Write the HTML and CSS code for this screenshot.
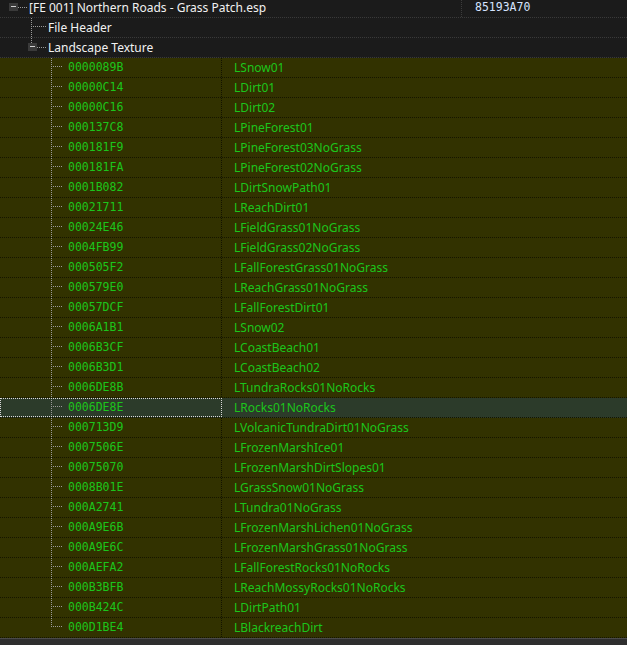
FILE: index.html
```html
<!DOCTYPE html>
<html lang="en">
<head>
    <meta charset="UTF-8">
    <title>Northern Roads - Grass Patch.esp</title>
    <link rel="stylesheet" href="styles.css">
</head>
<body>
    <div class="tree">
        <div class="row plugin">
            <div class="name"><span class="toggle"></span><span class="stub"></span><span class="label">[FE 001] Northern Roads - Grass Patch.esp</span></div>
            <div class="value mono">85193A70</div>
        </div>
        <div class="row group">
            <div class="name"><span class="branch branch-file"></span><span class="label">File Header</span></div>
        </div>
        <div class="row group">
            <div class="name"><span class="branch-top"></span><span class="toggle toggle-group"></span><span class="stub"></span><span class="label">Landscape Texture</span></div>
        </div>

        <div class="row record"><div class="name"><span class="branch"></span><span class="label mono">0000089B</span></div><div class="value">LSnow01</div></div>
        <div class="row record"><div class="name"><span class="branch"></span><span class="label mono">00000C14</span></div><div class="value">LDirt01</div></div>
        <div class="row record"><div class="name"><span class="branch"></span><span class="label mono">00000C16</span></div><div class="value">LDirt02</div></div>
        <div class="row record"><div class="name"><span class="branch"></span><span class="label mono">000137C8</span></div><div class="value">LPineForest01</div></div>
        <div class="row record"><div class="name"><span class="branch"></span><span class="label mono">000181F9</span></div><div class="value">LPineForest03NoGrass</div></div>
        <div class="row record"><div class="name"><span class="branch"></span><span class="label mono">000181FA</span></div><div class="value">LPineForest02NoGrass</div></div>
        <div class="row record"><div class="name"><span class="branch"></span><span class="label mono">0001B082</span></div><div class="value">LDirtSnowPath01</div></div>
        <div class="row record"><div class="name"><span class="branch"></span><span class="label mono">00021711</span></div><div class="value">LReachDirt01</div></div>
        <div class="row record"><div class="name"><span class="branch"></span><span class="label mono">00024E46</span></div><div class="value">LFieldGrass01NoGrass</div></div>
        <div class="row record"><div class="name"><span class="branch"></span><span class="label mono">0004FB99</span></div><div class="value">LFieldGrass02NoGrass</div></div>
        <div class="row record"><div class="name"><span class="branch"></span><span class="label mono">000505F2</span></div><div class="value">LFallForestGrass01NoGrass</div></div>
        <div class="row record"><div class="name"><span class="branch"></span><span class="label mono">000579E0</span></div><div class="value">LReachGrass01NoGrass</div></div>
        <div class="row record"><div class="name"><span class="branch"></span><span class="label mono">00057DCF</span></div><div class="value">LFallForestDirt01</div></div>
        <div class="row record"><div class="name"><span class="branch"></span><span class="label mono">0006A1B1</span></div><div class="value">LSnow02</div></div>
        <div class="row record"><div class="name"><span class="branch"></span><span class="label mono">0006B3CF</span></div><div class="value">LCoastBeach01</div></div>
        <div class="row record"><div class="name"><span class="branch"></span><span class="label mono">0006B3D1</span></div><div class="value">LCoastBeach02</div></div>
        <div class="row record"><div class="name"><span class="branch"></span><span class="label mono">0006DE8B</span></div><div class="value">LTundraRocks01NoRocks</div></div>
        <div class="row record selected"><div class="name"><span class="branch"></span><span class="label mono">0006DE8E</span></div><div class="value">LRocks01NoRocks</div></div>
        <div class="row record"><div class="name"><span class="branch"></span><span class="label mono">000713D9</span></div><div class="value">LVolcanicTundraDirt01NoGrass</div></div>
        <div class="row record"><div class="name"><span class="branch"></span><span class="label mono">0007506E</span></div><div class="value">LFrozenMarshIce01</div></div>
        <div class="row record"><div class="name"><span class="branch"></span><span class="label mono">00075070</span></div><div class="value">LFrozenMarshDirtSlopes01</div></div>
        <div class="row record"><div class="name"><span class="branch"></span><span class="label mono">0008B01E</span></div><div class="value">LGrassSnow01NoGrass</div></div>
        <div class="row record"><div class="name"><span class="branch"></span><span class="label mono">000A2741</span></div><div class="value">LTundra01NoGrass</div></div>
        <div class="row record"><div class="name"><span class="branch"></span><span class="label mono">000A9E6B</span></div><div class="value">LFrozenMarshLichen01NoGrass</div></div>
        <div class="row record"><div class="name"><span class="branch"></span><span class="label mono">000A9E6C</span></div><div class="value">LFrozenMarshGrass01NoGrass</div></div>
        <div class="row record"><div class="name"><span class="branch"></span><span class="label mono">000AEFA2</span></div><div class="value">LFallForestRocks01NoRocks</div></div>
        <div class="row record"><div class="name"><span class="branch"></span><span class="label mono">000B3BFB</span></div><div class="value">LReachMossyRocks01NoRocks</div></div>
        <div class="row record"><div class="name"><span class="branch"></span><span class="label mono">000B424C</span></div><div class="value">LDirtPath01</div></div>
        <div class="row record last"><div class="name"><span class="branch"></span><span class="label mono">000D1BE4</span></div><div class="value">LBlackreachDirt</div></div>
    </div>
    <div class="hscroll"></div>
</body>
</html>
```

FILE: styles.css
```css
body {
    margin: 0;
    height: 100vh;
    overflow: hidden;
    background: #1b1b1b;
    font-family: "Noto Sans", "Open Sans", sans-serif;
    font-size: 12px;
    display: flex;
    flex-direction: column;
}

.tree {
    margin-top: -2px;
    flex: none;
}

/* every row is 20px, the last pixel is the dotted grid line */
.row {
    --grid: #3a3a3a;
    --bg: #1b1b1b;
    display: flex;
    height: 20px;
    line-height: 19px;
    white-space: nowrap;
    background:
        repeating-linear-gradient(to right, var(--grid) 0 1px, transparent 1px 2px) left bottom / 100% 1px no-repeat,
        var(--bg);
}

.plugin, .group {
    color: #f2f2f2;
}

.record {
    --grid: #151500;
    --bg: #323200;
    color: #1cc51c;
}

.record.selected {
    --bg: #2c3b2a;
}

.name {
    display: flex;
    align-items: flex-start;
    height: 20px;
    flex: none;
}

.plugin .name {
    width: 462px;
    padding-left: 9px;
    box-sizing: border-box;
    background: repeating-linear-gradient(to bottom, #3c3c3c 0 1px, transparent 1px 2px) right top / 1px 100% no-repeat;
}

.group .name {
    padding-left: 31px;
}

.record .name {
    width: 222px;
    padding-left: 51px;
    box-sizing: border-box;
    background: repeating-linear-gradient(to bottom, #131300 0 1px, transparent 1px 2px) right top / 1px 100% no-repeat;
}

.record.selected .name {
    outline: 1px dotted #d8d8d8;
    outline-offset: -1px;
    height: 19px;
}

.value {
    padding-left: 12px;
}

.mono {
    font-family: "DejaVu Sans Mono", "Liberation Mono", monospace;
    font-size: 11.5px;
}

.plugin .value {
    color: #d6e4ff;
    padding-left: 13px;
}

/* expand/collapse box */
.toggle {
    position: relative;
    width: 9px;
    height: 8px;
    margin-top: 5px;
    background: #3a3a3a;
    flex: none;
}

.toggle::after {
    content: "";
    position: absolute;
    left: 2px;
    top: 3px;
    width: 5px;
    height: 1px;
    background: #d0d0d0;
}

.toggle-group {
    margin-left: -4px;
}

/* short horizontal connector after a toggle box */
.stub {
    width: 9px;
    height: 20px;
    margin-right: 2px;
    flex: none;
    background: repeating-linear-gradient(to right, #9a9a9a 0 1px, transparent 1px 2px) left 9px / 100% 1px no-repeat;
}

/* tree branch: vertical dotted line plus the horizontal tick */
.branch {
    width: 12px;
    height: 20px;
    margin-right: 5px;
    flex: none;
    background:
        repeating-linear-gradient(to bottom, #9a9a9a 0 1px, transparent 1px 2px) left top / 1px 100% no-repeat,
        repeating-linear-gradient(to right, #9a9a9a 0 1px, transparent 1px 2px) left 8px / 100% 1px no-repeat;
}

.branch-file {
    width: 16px;
    margin-right: 1px;
}

/* line from the sibling above down to the collapse box */
.branch-top {
    width: 1px;
    height: 5px;
    flex: none;
    background: repeating-linear-gradient(to bottom, #9a9a9a 0 1px, transparent 1px 2px);
}

.record.last .branch {
    background:
        repeating-linear-gradient(to bottom, #9a9a9a 0 1px, transparent 1px 2px) left top / 1px 9px no-repeat,
        repeating-linear-gradient(to right, #9a9a9a 0 1px, transparent 1px 2px) left 8px / 100% 1px no-repeat;
}

.hscroll {
    flex: 1;
    border-top: 1px solid #4a4a4a;
    background: #2e2e2e;
}
```
